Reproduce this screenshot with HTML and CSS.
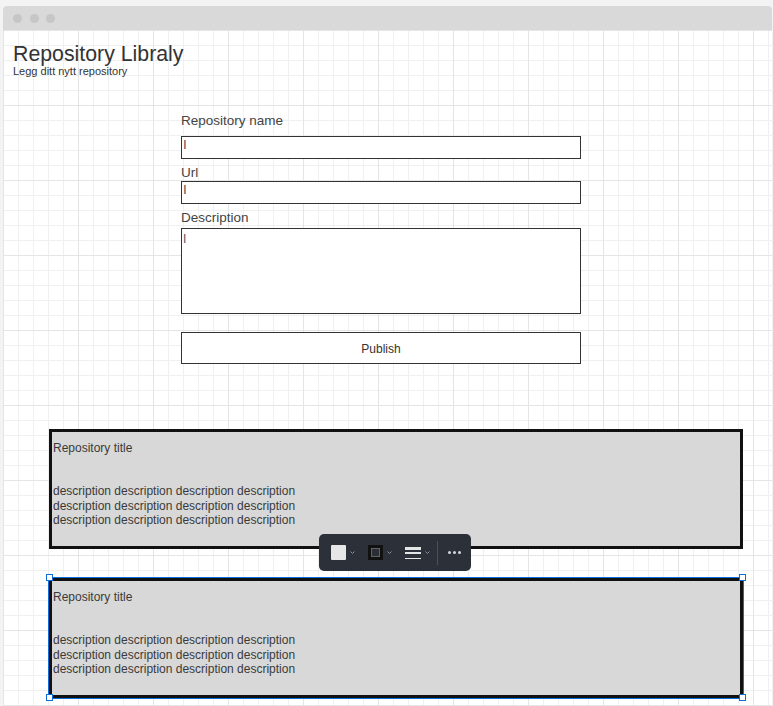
FILE: index.html
```html
<!DOCTYPE html>
<html lang="no">
<head>
  <meta charset="UTF-8" />
  <meta name="viewport" content="width=device-width, initial-scale=1.0"/>
  <title>Repository Libraly</title>
  <link rel="stylesheet" href="styles.css">
</head>
<body>
  <div class="window">
    <div class="titlebar">
      <span class="dot"></span>
      <span class="dot"></span>
      <span class="dot"></span>
    </div>

    <div class="canvas">
      <div class="page-header">
        <h1>Repository Libraly</h1>
        <p>Legg ditt nytt repository</p>
      </div>

      <form class="repo-form">
        <label>Repository name</label>
        <div class="input">I</div>
        <label>Url</label>
        <div class="input">I</div>
        <label>Description</label>
        <div class="input textarea">I</div>
        <button type="button" class="publish">Publish</button>
      </form>

      <div class="repo-list">
        <div class="toolbar">
          <span class="tool">
            <span class="swatch-fill"></span>
            <svg class="caret" width="5" height="3" viewBox="0 0 5 3"><path d="M0.5 0.5 L2.5 2.5 L4.5 0.5" /></svg>
          </span>
          <span class="tool">
            <span class="swatch-stroke"><span></span></span>
            <svg class="caret" width="5" height="3" viewBox="0 0 5 3"><path d="M0.5 0.5 L2.5 2.5 L4.5 0.5" /></svg>
          </span>
          <span class="tool">
            <svg width="16" height="12" viewBox="0 0 16 12">
              <rect x="0" y="0" width="16" height="3" fill="#e4e5e7"/>
              <rect x="0" y="5" width="16" height="2" fill="#e4e5e7"/>
              <rect x="0" y="11" width="16" height="1" fill="#e4e5e7"/>
            </svg>
            <svg class="caret" width="5" height="3" viewBox="0 0 5 3"><path d="M0.5 0.5 L2.5 2.5 L4.5 0.5" /></svg>
          </span>
          <span class="separator"></span>
          <svg class="more" width="13" height="3" viewBox="0 0 13 3">
            <circle cx="1.5" cy="1.5" r="1.5"/>
            <circle cx="6.5" cy="1.5" r="1.5"/>
            <circle cx="11.5" cy="1.5" r="1.5"/>
          </svg>
        </div>

        <div class="repo-card">
          <h2>Repository title</h2>
          <p>description description description description<br>description description description description<br>description description description description</p>
        </div>

        <div class="repo-card selected">
          <h2>Repository title</h2>
          <p>description description description description<br>description description description description<br>description description description description</p>
          <span class="handle top-left"></span>
          <span class="handle top-right"></span>
          <span class="handle bottom-left"></span>
          <span class="handle bottom-right"></span>
        </div>
      </div>
    </div>
  </div>
</body>
</html>
```

FILE: styles.css
```css
* {
  box-sizing: border-box;
}

body {
  margin: 0;
  padding: 6px 1px 0 3px;
  height: 706px;
  overflow: hidden;
  background: #f3f3f3;
  font-family: "Liberation Sans", Arial, sans-serif;
  color: #333;
}

.window {
  background: #fff;
  border-radius: 4px 4px 0 0;
  overflow: hidden;
}

.titlebar {
  height: 24px;
  background: #d9d9d9;
  display: flex;
  align-items: center;
  gap: 7.5px;
  padding-left: 10px;
}

.dot {
  width: 9px;
  height: 9px;
  border-radius: 50%;
  background: #c6c6c6;
}

.canvas {
  height: 676px;
  padding: 13px 0 0 10px;
  background-color: #fff;
  background-image:
    linear-gradient(to right, #e5e5e5 1px, transparent 1px),
    linear-gradient(to bottom, #e5e5e5 1px, transparent 1px),
    linear-gradient(to right, #f0f0f0 1px, transparent 1px),
    linear-gradient(to bottom, #f0f0f0 1px, transparent 1px);
  background-size: 75px 75px, 75px 75px, 15px 15px, 15px 15px;
}

.page-header h1 {
  margin: 0;
  font-size: 21.3px;
  line-height: 22px;
  font-weight: normal;
  color: #333;
}

.page-header p {
  margin: 0;
  font-size: 11px;
  line-height: 12px;
  color: #333;
}

.repo-form {
  width: 400px;
  margin: 36px 0 0 168px;
}

.repo-form label {
  display: block;
  margin-top: 6px;
  font-size: 13.5px;
  line-height: 16px;
  color: #444;
}

.repo-form label:first-child {
  margin: 0 0 7px;
}

.input {
  height: 23px;
  padding: 0 1px;
  border: 1px solid #333;
  background: #fff;
  font-size: 13.5px;
  line-height: 16px;
  color: #555;
}

.input.textarea {
  height: 86px;
  margin-top: 2px;
  padding-top: 3px;
  font-size: 12px;
  line-height: 14px;
}

.publish {
  display: block;
  width: 100%;
  height: 32px;
  margin-top: 18px;
  padding-top: 2px;
  border: 1px solid #333;
  background: #fff;
  font: 12px "Liberation Sans", Arial, sans-serif;
  color: #333;
}

.repo-list {
  position: relative;
  width: 694px;
  margin: 65px 0 0 36px;
}

.repo-card {
  position: relative;
  height: 120px;
  padding: 9px 0 0 1px;
  border: 3px solid #111;
  background: #d8d8d8;
  font-size: 12px;
  line-height: 1.2;
  color: #3a3a3a;
}

.repo-card + .repo-card {
  margin-top: 29px;
}

.repo-card h2 {
  margin: 0;
  font-size: 12px;
  font-weight: normal;
}

.repo-card p {
  margin: 29px 0 0;
}

.repo-card.selected {
  outline: 1px solid #0f6fd9;
}

.handle {
  position: absolute;
  width: 7px;
  height: 7px;
  background: #fff;
  border: 1px solid #0f6fd9;
}

.handle.top-left { top: -7px; left: -6px; }
.handle.top-right { top: -7px; right: -6px; }
.handle.bottom-left { bottom: -6px; left: -6px; }
.handle.bottom-right { bottom: -6px; right: -6px; }

.toolbar {
  position: absolute;
  left: 270px;
  top: 105px;
  z-index: 2;
  width: 152px;
  height: 37px;
  padding: 0 10px 0 12px;
  display: flex;
  align-items: center;
  background: #2c3139;
  border-radius: 5px;
}

.tool {
  display: flex;
  align-items: center;
  gap: 4px;
}

.tool + .tool {
  margin-left: 13px;
}

.caret path {
  fill: none;
  stroke: #8a9099;
  stroke-width: 1;
}

.swatch-fill {
  width: 15px;
  height: 15px;
  background: #e6e6e6;
  border-radius: 1px;
}

.swatch-stroke {
  width: 15px;
  height: 15px;
  padding: 3px;
  background: #111;
}

.swatch-stroke span {
  display: block;
  width: 9px;
  height: 9px;
  border: 1px solid #5f6368;
  background: #2b2e33;
}

.separator {
  width: 1px;
  height: 24px;
  margin-left: 7px;
  background: #4a515b;
}

.more {
  margin-left: 10px;
  fill: #d5d8dc;
}
```
